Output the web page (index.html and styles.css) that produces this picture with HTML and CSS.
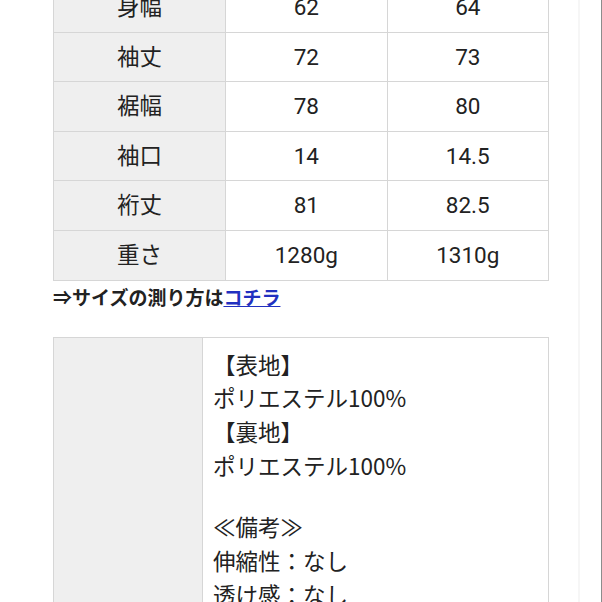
FILE: index.html
```html
<!DOCTYPE html>
<html lang="ja">
<head>
<meta charset="utf-8">
<link rel="stylesheet" href="styles.css">
</head>
<body>
<div class="page">
  <div class="content">
    <table class="size">
      <tr><th>身幅</th><td>62</td><td>64</td></tr>
      <tr><th>袖丈</th><td>72</td><td>73</td></tr>
      <tr><th>裾幅</th><td>78</td><td>80</td></tr>
      <tr><th>袖口</th><td>14</td><td>14.5</td></tr>
      <tr><th>裄丈</th><td>81</td><td>82.5</td></tr>
      <tr><th>重さ</th><td>1280g</td><td>1310g</td></tr>
    </table>
    <p class="howto">⇒サイズの測り方は<a href="#">コチラ</a></p>
    <table class="spec">
      <tr>
        <th>素材</th>
        <td>
          <div>【表地】</div>
          <div>ポリエステル100%</div>
          <div>【裏地】</div>
          <div>ポリエステル100%</div>
          <div class="blank"></div>
          <div>≪備考≫</div>
          <div>伸縮性：なし</div>
          <div>透け感：なし</div>
          <div>裏地：あり</div>
          <div>光沢感：なし</div>
          <div>ポケット：あり</div>
          <div>生地の厚さ：普通</div>
          <div>重量感：普通</div>
          <div>原産国：中国</div>
          <div>&nbsp;</div>
        </td>
      </tr>
    </table>
  </div>
</div>
</body>
</html>
```
FILE: styles.css
```css
html, body {
  margin: 0;
  padding: 0;
  background: #fff;
}
body {
  width: 602px;
  height: 602px;
  overflow: hidden;
  font-family: Roboto, "Noto Sans CJK JP", sans-serif;
  color: #222;
}
.page {
  box-sizing: border-box;
  width: 602px;
  height: 602px;
  border-right: 1px solid #8c8c8c;
  overflow: hidden;
}
.content {
  box-sizing: border-box;
  width: 580px;
  border-right: 2px solid #f6f6f6;
  min-height: 602px;
  padding-left: 53px;
}
table {
  border-collapse: collapse;
  width: 496px;
}
.size {
  margin-top: -18px;
  font-size: 22.5px;
}
.size th, .size td {
  border: 1px solid #d6d6d6;
  height: 48.6px;
  padding: 0;
  text-align: center;
  font-weight: normal;
  line-height: 1;
}
.size th {
  background: #efefef;
  width: 172px;
}
.size td {
  width: 161px;
}
.howto {
  margin: 0;
  padding-top: 3px;
  font-size: 19px;
  line-height: 26px;
  font-weight: bold;
  font-family: "Noto Sans CJK JP", sans-serif;
  color: #222;
  height: 53px;
}
.howto a {
  color: #2130c0;
  text-decoration: underline;
}
.spec th, .spec td {
  border: 1px solid #d6d6d6;
  vertical-align: middle;
}
.spec th {
  width: 148px;
  background: #efefef;
  font-weight: normal;
  font-size: 22px;
  color: #444;
  padding: 0;
}
.spec td {
  vertical-align: top;
  text-align: left;
  font-family: "Noto Sans CJK JP", sans-serif;
  font-size: 22.5px;
  line-height: 33.7px;
  padding: 10px 10px 38px 10px;
}
.spec .blank {
  height: 28px;
}
```
